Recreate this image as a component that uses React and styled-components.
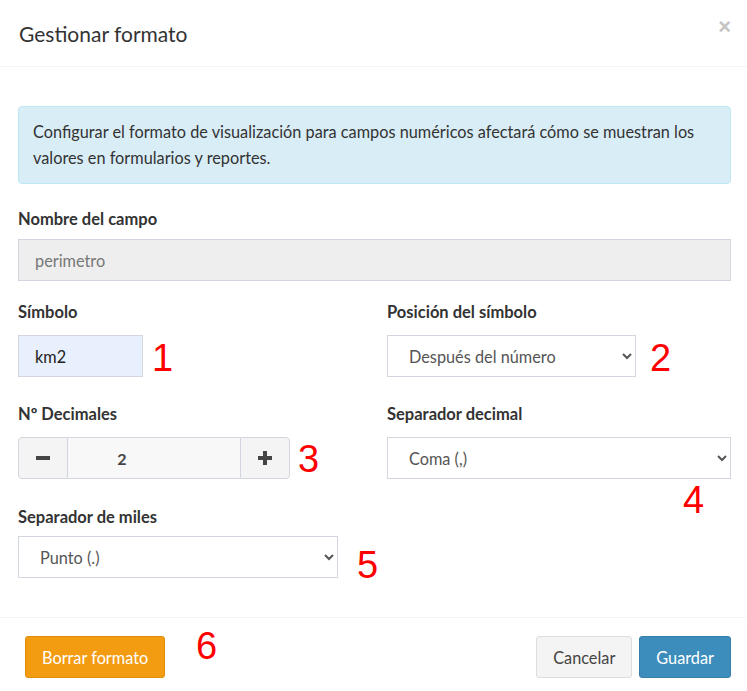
import React from "react";
import styled, { createGlobalStyle } from "styled-components";

const Global = createGlobalStyle`
  html, body { margin: 0; padding: 0; background: #fff; }
  body { font-family: Lato, "Noto Sans", sans-serif; color: #333; }
  * { box-sizing: border-box; }
`;

const Dialog = styled.div`
  position: relative;
  width: 747px;
  height: 691px;
  background: #fff;
  display: flex;
  flex-direction: column;
`;

const Header = styled.div`
  height: 67px;
  border-bottom: 1px solid #f4f4f4;
  display: flex;
  align-items: center;
  justify-content: space-between;
  padding: 0 16px 0 19px;
`;

const Title = styled.h4`
  margin: 0;
  font-size: 21px;
  font-weight: 400;
  color: #333;
`;

const Close = styled.button`
  border: 0;
  background: none;
  color: #c4c4c4;
  font-size: 22px;
  font-weight: 700;
  line-height: 1;
  padding: 0;
  margin-top: -12px;
  font-family: "Liberation Sans", Arial, sans-serif;
`;

const Body = styled.div`
  padding: 39px 16px 0 18px;
  flex: 1;
`;

const Alert = styled.div`
  background: #d9edf7;
  border: 1px solid #bce8f1;
  border-radius: 4px;
  padding: 12px 15px 12px 14px;
  font-size: 16.3px;
  line-height: 26px;
  color: #333;
`;

const Label = styled.div`
  font-weight: 700;
  font-size: 16.5px;
  line-height: 22px;
  margin-top: ${(p) => p.$mt || 0}px;
  margin-bottom: ${(p) => p.$mb || 9}px;
`;

const TextInput = styled.input`
  display: block;
  width: ${(p) => p.$w || "100%"};
  height: 42px;
  border: 1px solid #d2d6de;
  background: ${(p) => p.$bg || "#fff"};
  color: ${(p) => p.$color || "#555"};
  font: inherit;
  font-size: 16.3px;
  padding: 0 16px;
  outline: none;
`;

const Select = styled.select`
  display: block;
  width: ${(p) => p.$w};
  height: 42px;
  border: 1px solid #d2d6de;
  border-radius: 0;
  background: #fff;
  color: #555;
  font: inherit;
  font-size: 16.3px;
  padding: 0 10px 0 17px;
  outline: none;
`;

const Grid = styled.div`
  display: grid;
  grid-template-columns: 351px 344px;
  column-gap: 18px;
`;

const Field = styled.div``;

const Group = styled.div`
  display: flex;
  width: 272px;
  height: 42px;
`;

const StepBtn = styled.button`
  width: 50px;
  border: 1px solid #d2d6de;
  background: #f4f4f4;
  color: #444;
  display: flex;
  align-items: center;
  justify-content: center;
  padding: 0;
  border-radius: ${(p) => (p.$side === "left" ? "4px 0 0 4px" : "0 4px 4px 0")};
`;

const StepValue = styled.input`
  flex: 1;
  min-width: 0;
  border: 1px solid #d2d6de;
  border-left: 0;
  border-right: 0;
  background: #f8f8f8;
  text-align: center;
  padding: 0 64px 0 0;
  font: inherit;
  font-size: 16px;
  font-weight: 700;
  color: #444;
  outline: none;
`;

const Footer = styled.div`
  border-top: 1px solid #f4f4f4;
  height: 74px;
  display: flex;
  align-items: flex-start;
  justify-content: space-between;
  padding: 18px 16px 0 25px;
`;

const Btn = styled.button`
  height: 42px;
  padding: 0 ${(p) => p.$px || 16}px;
  border-radius: 3px;
  border: 1px solid ${(p) => p.$border};
  background: ${(p) => p.$bg};
  color: ${(p) => p.$color};
  font: inherit;
  font-size: 16.3px;
`;

const Right = styled.div`
  display: flex;
  gap: 7px;
`;

const Mark = styled.span`
  position: absolute;
  left: ${(p) => p.$x}px;
  top: ${(p) => p.$y}px;
  color: #ff0000;
  font-family: "Liberation Sans", Arial, sans-serif;
  font-size: 38px;
  line-height: 1;
`;

const Minus = () => (
  <svg width="14" height="4" viewBox="0 0 14 4"><rect width="14" height="4" fill="#444" /></svg>
);
const Plus = () => (
  <svg width="14" height="14" viewBox="0 0 14 14">
    <rect x="5" width="4" height="14" fill="#444" />
    <rect y="5" width="14" height="4" fill="#444" />
  </svg>
);

export default function App() {
  return (
    <>
      <Global />
      <Dialog>
        <Header>
          <Title>Gestionar formato</Title>
          <Close>×</Close>
        </Header>
        <Body>
          <Alert>
            Configurar el formato de visualización para campos numéricos afectará cómo se muestran los
            valores en formularios y reportes.
          </Alert>
          <Label $mt={24} $mb={9}>Nombre del campo</Label>
          <TextInput readOnly value="perimetro" $bg="#eee" $color="#777" />
          <Grid>
            <Field>
              <Label $mt={20} $mb={12}>Símbolo</Label>
              <TextInput readOnly value="km2" $w="125px" $bg="#e8f0fe" $color="#222" />
            </Field>
            <Field>
              <Label $mt={20} $mb={12}>Posición del símbolo</Label>
              <Select $w="249px" defaultValue="d">
                <option value="d">Después del número</option>
              </Select>
            </Field>
            <Field>
              <Label $mt={26} $mb={12}>Nº Decimales</Label>
              <Group>
                <StepBtn $side="left"><Minus /></StepBtn>
                <StepValue readOnly value="2" />
                <StepBtn $side="right"><Plus /></StepBtn>
              </Group>
            </Field>
            <Field>
              <Label $mt={26} $mb={12}>Separador decimal</Label>
              <Select $w="344px" defaultValue="c">
                <option value="c">Coma (,)</option>
              </Select>
            </Field>
            <Field>
              <Label $mt={27} $mb={8}>Separador de miles</Label>
              <Select $w="320px" defaultValue="p">
                <option value="p">Punto (.)</option>
              </Select>
            </Field>
          </Grid>
        </Body>
        <Footer>
          <Btn $bg="#f39c12" $border="#e08e0b" $color="#fff">Borrar formato</Btn>
          <Right>
            <Btn $bg="#f4f4f4" $border="#ddd" $color="#444" $px={16}>Cancelar</Btn>
            <Btn $bg="#3c8dbc" $border="#367fa9" $color="#fff" $px={16}>Guardar</Btn>
          </Right>
        </Footer>
        <Mark $x={152} $y={339}>1</Mark>
        <Mark $x={650} $y={339}>2</Mark>
        <Mark $x={298} $y={440}>3</Mark>
        <Mark $x={683} $y={481}>4</Mark>
        <Mark $x={357} $y={546}>5</Mark>
        <Mark $x={196} $y={627}>6</Mark>
      </Dialog>
    </>
  );
}
